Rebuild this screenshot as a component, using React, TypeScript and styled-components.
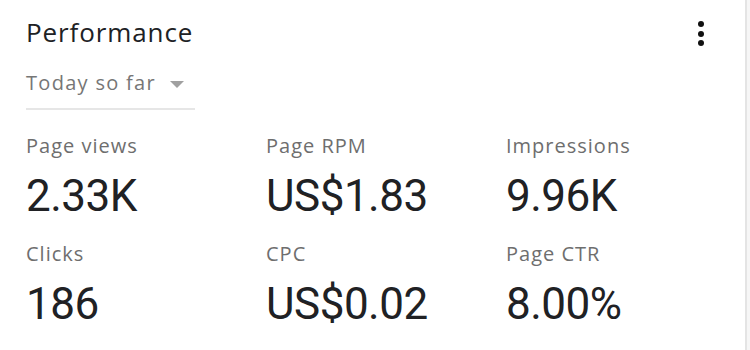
import styled, { createGlobalStyle } from 'styled-components';

const GlobalStyle = createGlobalStyle`
  html, body {
    margin: 0;
    padding: 0;
    background: #f6f6f6;
  }
  body {
    font-family: Roboto, 'Liberation Sans', Arial, sans-serif;
  }
`;

const Card = styled.div`
  width: 747px;
  height: 350px;
  box-sizing: border-box;
  background: #fff;
  border-right: 2px solid #e4e4e4;
  padding: 14px 0 0 26px;
`;

const Header = styled.div`
  display: flex;
  justify-content: space-between;
  align-items: flex-start;
  padding-right: 38px;
`;

const Title = styled.h2`
  margin: 0;
  font-family: 'Open Sans', Roboto, sans-serif;
  font-size: 26px;
  font-weight: 400;
  line-height: 36px;
  color: #202124;
  letter-spacing: 0.9px;
`;

const Kebab = styled.button`
  border: 0;
  background: none;
  padding: 0;
  margin-top: 7px;
  width: 12px;
  height: 25px;
  display: flex;
  flex-direction: column;
  align-items: center;
  justify-content: space-between;
  cursor: pointer;
  span {
    width: 6px;
    height: 6px;
    border-radius: 50%;
    background: #111;
  }
`;

const RangeSelect = styled.div`
  margin-top: 20px;
  width: 169px;
  display: flex;
  align-items: center;
  gap: 14px;
  padding-bottom: 12px;
  border-bottom: 2px solid #e6e6e6;
  font-family: 'Open Sans', Roboto, sans-serif;
  font-size: 20px;
  line-height: 26px;
  color: #767676;
  letter-spacing: 1.3px;
`;

const Caret = styled.span`
  width: 0;
  height: 0;
  border-left: 7px solid transparent;
  border-right: 7px solid transparent;
  border-top: 7px solid #a0a0a0;
  margin-top: 2px;
`;

const Grid = styled.div`
  display: grid;
  grid-template-columns: repeat(3, 240px);
  row-gap: 16px;
  margin-top: 22px;
`;

const Metric = styled.div`
  display: flex;
  flex-direction: column;
`;

const Label = styled.div`
  font-family: 'Open Sans', Roboto, sans-serif;
  font-size: 20px;
  line-height: 28px;
  color: #6e6e6e;
  letter-spacing: 1px;
`;

const Value = styled.div`
  margin-top: 8px;
  font-size: 44px;
  line-height: 56px;
  color: #202124;
  letter-spacing: -0.5px;
`;

const metrics = [
  { label: 'Page views', value: '2.33K' },
  { label: 'Page RPM', value: 'US$1.83' },
  { label: 'Impressions', value: '9.96K' },
  { label: 'Clicks', value: '186' },
  { label: 'CPC', value: 'US$0.02' },
  { label: 'Page CTR', value: '8.00%' },
];

export default function App() {
  return (
    <>
      <GlobalStyle />
      <Card>
        <Header>
          <Title>Performance</Title>
          <Kebab aria-label="More options">
            <span />
            <span />
            <span />
          </Kebab>
        </Header>
        <RangeSelect>
          Today so far
          <Caret />
        </RangeSelect>
        <Grid>
          {metrics.map((m) => (
            <Metric key={m.label}>
              <Label>{m.label}</Label>
              <Value>{m.value}</Value>
            </Metric>
          ))}
        </Grid>
      </Card>
    </>
  );
}
